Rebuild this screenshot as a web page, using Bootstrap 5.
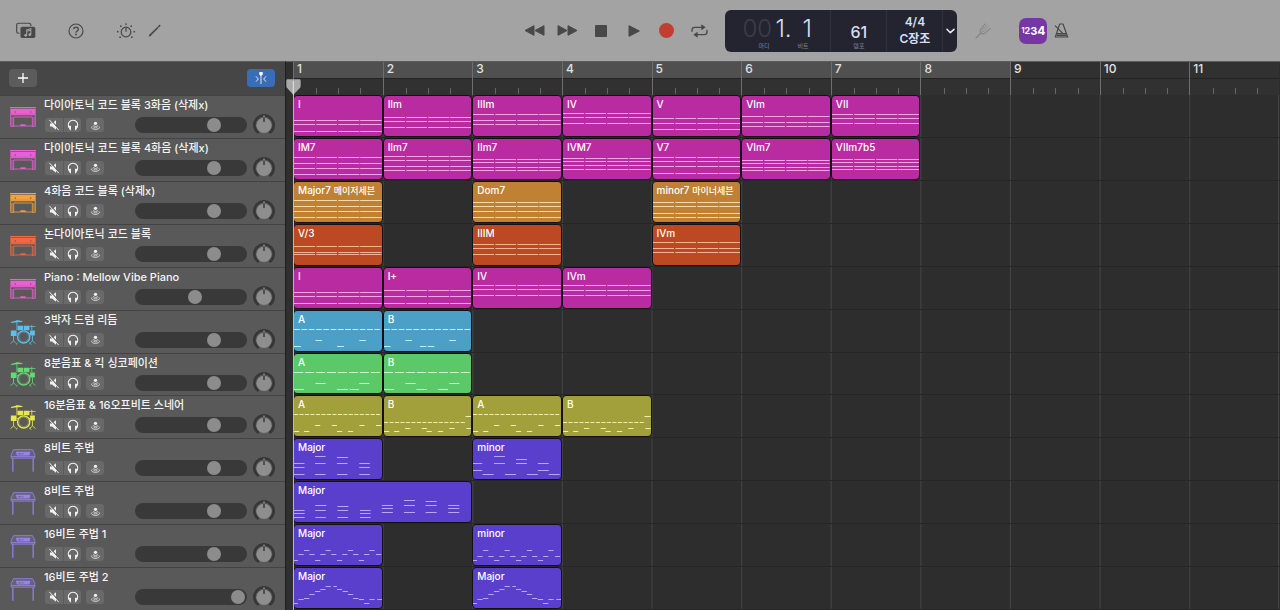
<!DOCTYPE html>
<html lang="ko" data-bs-theme="dark">
<head>
<meta charset="utf-8">
<meta name="viewport" content="width=device-width, initial-scale=1">
<title>GarageBand</title>
<link href="https://cdn.jsdelivr.net/npm/bootstrap@5.3.0/dist/css/bootstrap.min.css" rel="stylesheet">
<style>
  body { font-family: Inter, "Noto Sans CJK KR", sans-serif; font-size: 11px; line-height: 16px; background: #2d2d2d; color: #f2f2f2; }
  svg { display: block; }
  button { background: none; border: 0; padding: 0; color: inherit; }
  .app { height: 100vh; }

  /* top bar */
  .topbar { height: 61px; background: #a3a3a3; color: #484848; }
  .tools { flex: 0 0 40.5%; padding-left: 12px; }
  .tools .apart { margin-left: 22px; }
  .tool { width: 28px; height: 28px; display: grid; place-items: center; }
  .transport .tool { width: 33px; }
  .lcd { width: 232px; height: 42px; margin-left: 9px; border-radius: 6px; background: #232430; color: #d5def2; }
  .lcd > * + * { border-left: 1px solid #2f303c; }
  .lcd-pos { width: 105px; padding-left: 17px; }
  .lcd-mid { width: 56px; }
  .lcd-menu { width: 15px; flex: 1; }
  .digits { font-size: 24px; line-height: 26px; font-weight: 300; padding-top: 6px; }
  .digits .off { color: #3c3d48; width: 33px; }
  .digits .beat { margin-left: 11px; }
  .tempo { font-size: 16px; line-height: 18px; font-weight: 500; padding: 13px 0 1px; }
  .cap { font-size: 6px; line-height: 8px; color: #7d8397; }
  .sig { font-size: 12px; line-height: 17px; font-weight: 600; padding-top: 3px; }
  .countin { width: 28px; height: 26px; margin-left: 26px; border-radius: 7px; background: #7636a4; color: #fff; font-weight: 700; line-height: 26px; }
  .c1 { font-size: 7px; } .c2 { font-size: 9px; } .c3 { font-size: 11px; } .c4 { font-size: 12px; }

  /* track headers */
  .heads { width: 285px; background: #595959; border-top: 1px solid #5d5d5d; }
  .heads-bar { height: 33px; background: #464646; padding: 0 10px 2px 9px; }
  .bar-btn { width: 28px; height: 18px; border-radius: 4px; background: #5c5c5c; display: grid; place-items: center; }
  .bar-btn.on { background: #3a6db8; }
  .head { flex: 1 0 0; min-height: 42px; border-top: 1px solid #434343; padding: 1px 10px 0; }
  .picto { width: 26px; }
  .head-body { margin-left: 8px; }
  .name { font-size: 11px; line-height: 17px; font-weight: 500; color: #f4f4f4; }
  .mini { height: 14px; width: 18px; background: #696969; display: grid; place-items: center; }
  .mini.l { border-radius: 3px 0 0 3px; margin-left: 1px; }
  .mini.r { border-radius: 0 3px 3px 0; border-left: 1px solid #5b5b5b; }
  .mini.s { border-radius: 3px; margin-left: 5px; }
  .vol { appearance: none; width: 112px; height: 16px; border-radius: 8px; background: #393939; padding: 0 1px; margin: 0 6px 0 auto; }
  .vol::-webkit-slider-runnable-track { height: 16px; background: transparent; }
  .vol::-webkit-slider-thumb { appearance: none; width: 14px; height: 14px; margin-top: 1px; border-radius: 50%; background: #8c8c8c; }
  .vol::-moz-range-thumb { width: 14px; height: 14px; border: 0; border-radius: 50%; background: #8c8c8c; }

  /* timeline */
  .gutter { width: 8px; background: #2f2f2f; border-left: 1px solid #202020; border-top: 1px solid #5d5d5d; }
  .stage { min-width: 0; padding-right: 1px; border-top: 1px solid #5d5d5d; }
  .eleven { display: grid; grid-template-columns: repeat(11, minmax(0, 1fr)); }
  .ruler { height: 33px; }
  .measure { border-left: 1px solid #6e6e6e; }
  .measure span { display: block; height: 17px; line-height: 14px; font-size: 12px; font-weight: 500; padding-left: 3px; color: #e2e2e2; background: #313131; border-bottom: 1px solid #232323; }
  .measure.song span { background: #505050; }
  .ticks { height: 16px; background: #313131; padding-top: 9px; display: grid; grid-template-columns: repeat(4, 1fr); }
  .ticks i { border-left: 1px solid #666; height: 6px; }
  .ticks i:first-child { visibility: hidden; }
  .lanes { box-shadow: inset -1px 0 #454545; background: linear-gradient(to right, #444 1px, transparent 1px) 0 0 / calc(100% / 11) 100%; }
  .lane { flex: 1 0 0; min-height: 42px; border-bottom: 1px solid #262626; }
  .region { grid-row: 1; border: 1px solid #151015; border-radius: 4px; overflow: hidden; display: grid; }
  .region > * { grid-area: 1 / 1; }
  .label { font-size: 10px; line-height: 12px; font-weight: 500; padding: 2px 0 0 4px; color: #fff; white-space: nowrap; }
  .label :lang(ko) { font-size: 9px; }
  .playhead { top: 0; bottom: 0; left: 0; width: 15px; margin-left: -7px; pointer-events: none; }
  .playhead::after { content: ""; display: block; width: 1px; background: #b9b9b9; margin-left: 7px; flex: 1; }
  .pin { margin-top: 17px; }
  .magenta { background: #b92ba0; } .magenta rect { fill: #f3a5e6; }
  .amber { background: #c08134; } .amber rect { fill: #f9d9a8; }
  .rust { background: #ba4924; } .rust rect { fill: #f6b294; }
  .blue { background: #4aa0c6; } .blue rect { fill: #c3ecfa; }
  .green { background: #5cc969; } .green rect { fill: #c6f9c8; }
  .olive { background: #a1a03b; } .olive rect { fill: #efefad; }
  .violet { background: #593fcb; } .violet rect { fill: #b7a7f8; }
</style>
</head>
<body>
<svg class="d-none">
  <symbol id="piano" viewBox="0 0 78 60">
    <path fill="currentColor" d="M0 0h78v4H0zM1 5h76v20H1z"/>
    <path fill="#595959" opacity=".7" d="M14 13h4v4h-4zM60 13h4v4h-4z"/>
    <path fill="#595959" opacity=".35" d="M0 4h78v2H0zM0 20h78v2H0z"/>
    <path fill="none" stroke="currentColor" stroke-width="2.5" d="M2 24v34h9V30h56v28h9V24M6 30v26M72 30v26M8 57h23M46 57h23"/>
    <path fill="currentColor" d="M31 52h16v6H31z"/>
  </symbol>
  <symbol id="drums" viewBox="0 0 76 74">
    <path fill="currentColor" d="M2 6l20-5 14 2v3L20 7 3 9zM2 31h17v16H2zM22 17h17v13H22zM41 17h16v13H41zM59 31h14v15H59zM57 18h18v2H57z"/>
    <path fill="none" stroke="currentColor" stroke-width="2.5" d="M20 0v30M64 14v16M10 47v15l-9 8M10 62l8 8M66 46v16l-9 8M66 62l9 8M22 68l-5 5M57 68l6 5M20 40h40"/>
    <circle cx="40" cy="50" r="18" fill="#595959" stroke="currentColor" stroke-width="4"/>
    <circle cx="40" cy="50" r="14" fill="none" stroke="currentColor" stroke-width="1"/>
  </symbol>
  <symbol id="keys" viewBox="0 0 74 68">
    <path fill="currentColor" fill-opacity=".2" stroke="currentColor" stroke-width="2.5" stroke-linejoin="round" d="M9 2h56l7 14v11H2V16z"/>
    <path fill="currentColor" d="M16 8h43l-3 11H19zM2 21h70v2H2z"/>
    <path fill="#595959" d="M24 12h3v4h-3zM30 12h2v4h-2zM36 12h2v4h-2z"/>
    <path stroke="currentColor" stroke-width="3.5" d="M7 27v40M67 27v40"/>
  </symbol>
  <symbol id="mute" viewBox="0 0 30 30">
    <path fill="#f0f0f0" d="M5 11h5l10-8v24l-10-8H5z"/>
    <path stroke="#696969" stroke-width="3" d="M7 2l21 24"/>
    <path stroke="#f0f0f0" stroke-width="2.5" stroke-linecap="round" d="M4 3l22 24"/>
  </symbol>
  <symbol id="phones" viewBox="0 0 30 30">
    <path fill="none" stroke="#f0f0f0" stroke-width="2.6" d="M5 22C0 11 7 3 15 3s15 8 10 19"/>
    <path fill="#f0f0f0" d="M5 17h5v11H8c-3-2-4-7-3-11zM25 17h-5v11h2c3-2 4-7 3-11z"/>
  </symbol>
  <symbol id="monitor" viewBox="0 0 30 30">
    <circle cx="15" cy="9" r="4.5" fill="#f0f0f0"/>
    <path fill="none" stroke="#f0f0f0" stroke-width="2" stroke-linecap="round" d="M9 16q6 4 12 0M5 18q-3 3 2 6 8 4 16 0 5-3 2-6M11 21q4 2 8 0"/>
  </symbol>
  <symbol id="pan" viewBox="0 0 66 66">
    <path fill="none" stroke="#373737" stroke-width="8" d="M17 57A29 29 0 1 1 49 57"/>
    <circle cx="33" cy="34" r="23" fill="#8e8e8e"/>
    <path stroke="#222" stroke-width="3.5" d="M33 11v13"/><path stroke="#ddd" stroke-width="2" d="M33 4v6"/>
  </symbol>
</svg>

<div class="app d-flex flex-column overflow-hidden">
  <header class="topbar d-flex align-items-center">
    <div class="tools d-flex align-items-center">
      <button class="tool" aria-label="Loop library"><svg width="20" height="17" viewBox="0 0 58 48"><path fill="none" stroke="currentColor" stroke-width="3.5" d="M10 32H7c-3 0-5-2-5-5V8c0-3 2-5 5-5h31c3 0 5 2 5 5v3"/><rect x="13" y="13" width="43" height="33" rx="5" fill="currentColor"/><path fill="none" stroke="#a3a3a3" stroke-width="3" d="M31 38V22l12-3v17M31 26l12-3"/><circle cx="28" cy="38" r="4" fill="#a3a3a3"/><circle cx="40" cy="36" r="4" fill="#a3a3a3"/></svg></button>
      <button class="tool apart" aria-label="Help"><svg width="16" height="16" viewBox="0 0 48 48"><circle cx="24" cy="24" r="21" fill="none" stroke="currentColor" stroke-width="3.5"/><path fill="none" stroke="currentColor" stroke-width="4" d="M17 19c0-9 14-9 14 0 0 5-7 5-7 10"/><circle cx="24" cy="34.500" r="2.800" fill="currentColor"/></svg></button>
      <button class="tool apart" aria-label="Smart controls"><svg width="20" height="16" viewBox="0 0 58 46"><circle cx="29" cy="26" r="14" fill="none" stroke="currentColor" stroke-width="3.500"/><path stroke="currentColor" stroke-width="3.500" d="M29 12v13"/><g fill="currentColor"><circle cx="29" cy="3" r="2.500"/><circle cx="14" cy="9" r="2.500"/><circle cx="44" cy="9" r="2.500"/><circle cx="5" cy="25" r="2.500"/><circle cx="53" cy="25" r="2.500"/><circle cx="12" cy="41" r="2.500"/><circle cx="46" cy="41" r="2.500"/></g></svg></button>
      <button class="tool" aria-label="Editors"><svg width="13" height="13" viewBox="0 0 38 38"><path stroke="currentColor" stroke-width="5" stroke-linecap="round" d="M7 32L28 11"/><path stroke="currentColor" stroke-width="5" stroke-linecap="round" d="M32 7l2-2"/><path fill="currentColor" d="M2 37l3-8 5 5z"/></svg></button>
    </div>
    <div class="transport d-flex">
      <button class="tool" aria-label="Rewind"><svg width="21" height="13" viewBox="0 0 63 39"><path fill="currentColor" stroke="currentColor" stroke-width="3" stroke-linejoin="round" d="M30 5v29L3 19.500zM60 5v29L33 19.500z"/></svg></button>
      <button class="tool" aria-label="Forward"><svg width="21" height="13" viewBox="0 0 63 39"><path fill="currentColor" stroke="currentColor" stroke-width="3" stroke-linejoin="round" d="M3 5v29l27-14.500zM33 5v29l27-14.500z"/></svg></button>
      <button class="tool" aria-label="Stop"><svg width="12" height="12"><rect width="12" height="12" rx="1" fill="currentColor"/></svg></button>
      <button class="tool" aria-label="Play"><svg width="12" height="14" viewBox="0 0 36 42"><path fill="currentColor" stroke="currentColor" stroke-width="3" stroke-linejoin="round" d="M3 5v32l31-16z"/></svg></button>
      <button class="tool" aria-label="Record"><svg width="15" height="15"><circle cx="7.500" cy="7.500" r="7.500" fill="#c23e31"/></svg></button>
      <button class="tool" aria-label="Cycle"><svg width="17" height="14" viewBox="0 0 51 42"><path fill="none" stroke="currentColor" stroke-width="4" stroke-linecap="round" d="M3 22v-4c0-6 3-8 8-8h25M48 19v5c0 6-3 8-8 8H15"/><path fill="currentColor" d="M31 1l13 9-13 9zM20 23L7 32l13 9z"/></svg></button>
    </div>
    <div class="lcd d-flex flex-shrink-0">
      <div class="lcd-pos">
        <div class="digits d-flex"><span class="off">00</span><span>1.</span><span class="beat">1</span></div>
        <div class="cap d-flex gap-4 ms-3"><span>마디</span><span class="ms-1">비트</span></div>
      </div>
      <div class="lcd-mid text-center"><div class="tempo">61</div><div class="cap">템포</div></div>
      <div class="lcd-mid sig text-center"><div>4/4</div><div>C장조</div></div>
      <button class="lcd-menu d-grid align-items-center justify-content-center" aria-label="Display mode"><svg width="9" height="6" viewBox="0 0 27 18"><path fill="none" stroke="#eee" stroke-width="4.500" stroke-linecap="round" stroke-linejoin="round" d="M3 4l10 10L24 4"/></svg></button>
    </div>
    <button class="tool ms-2" aria-label="Tuner"><svg class="ms-2" width="16" height="16" viewBox="0 0 48 48" fill="none" stroke="#858585" stroke-width="3.500" stroke-linecap="round"><path d="M3 45l15-15M30 3L18 18c-4 5-3 9 0 12s8 3 12 0L46 17"/><path stroke-width="2" d="M36 6L22 22v4h4l14-15"/></svg></button>
    <button class="countin d-flex justify-content-center align-items-center" aria-label="Count-in"><span class="c1">1</span><span class="c2">2</span><span class="c3">3</span><span class="c4">4</span></button>
    <button class="tool" aria-label="Metronome"><svg width="15" height="15" viewBox="0 0 45 45" fill="none" stroke="currentColor" stroke-width="3.500" stroke-linejoin="round"><path d="M17 3h10l14 39H4zM8 32h30M3 8l24 24M2 42h41"/><path d="M8 37h30" stroke-width="5"/></svg></button>
  </header>

  <main class="d-flex flex-fill overflow-hidden">
    <section class="heads d-flex flex-column flex-shrink-0">
      <div class="heads-bar d-flex align-items-center justify-content-between">
        <button class="bar-btn" aria-label="Add track"><svg width="10" height="10"><path stroke="#fff" stroke-width="1.300" d="M5 0v10M0 5h10"/></svg></button>
        <button class="bar-btn on" aria-label="Catch playhead"><svg width="12" height="12" viewBox="0 0 36 36" fill="none" stroke="#fff" stroke-width="2.500"><path d="M18 8v28M3 13l7 8-7 8M33 13l-7 8 7 8"/><path fill="#fff" d="M14 1h8v6l-4 4-4-4z"/></svg></button>
      </div>
      <div id="heads" class="d-flex flex-column flex-fill"></div>
    </section>
    <div class="gutter flex-shrink-0"></div>
    <section class="stage d-flex flex-column flex-fill position-relative">
      <div id="ruler" class="ruler eleven flex-shrink-0"></div>
      <div id="lanes" class="lanes d-flex flex-column flex-fill"></div>
      <div class="playhead position-absolute d-flex flex-column"><svg class="pin" width="15" height="16" viewBox="0 0 45 48"><path fill="#aaa" d="M5 1h35q4 0 4 4v17q0 3-3 6L22 47 4 28q-3-3-3-6V5q0-4 4-4z"/><path stroke="#eee" stroke-width="2.500" d="M22 6v42"/></svg></div>
    </section>
  </main>
</div>

<script>
  // A note is [start, length] in percent of a bar; each voice is [y, notes].
  const beats = [[0, 24], [25.5, 23.5], [50.5, 24], [75.5, 24.5]];
  const chord = (...ys) => ys.map(y => [y, beats]);
  const steps = (n, len, count = n) => Array.from({ length: count }, (_, i) => [i * 100 / n, len]);
  const at = (len, ...xs) => xs.map(x => [x, len]);
  const drumA = [[18, steps(16, 4.7)], [29, at(6, 24, 43, 74.5, 93.5)], [35, at(6, 0, 11.5, 49, 61.5)]];
  const drumB = [[20, at(7, 93)], [26, steps(16, 4.7, 15)], [32, at(6, 24, 43, 74.5, 94)], [35, at(6, 0, 11.5, 48.5, 61.5)]];
  const arpeggio = y => [[25, at(6, 11.5, 36, 61.5, 86)], [y, at(6, 5, 17.5, 30, 42.5, 55, 67.5, 80, 93.5)], [35, [[0, 4.5], ...at(6, 24, 49, 74)]]];
  const climb = [[35, [[0, 4.5], [80, 6]]], [31, at(6, 5, 74, 86, 95)], [30, at(6, 11.5, 67.5)], [26, at(6, 17.5, 61.5)], [23, at(6, 24, 55.5)], [21, at(6, 30, 49)], [18, [[36, 6], [45, 4]]]];

  const tracks = [
    { name: '다이아토닉 코드 블록 3화음 (삭제x)', icon: 'piano', tint: '#ea5fd2', color: 'magenta', regions: [
      [1, 1, 'I', chord(24, 28, 35)], [2, 1, 'IIm', chord(21, 25, 31)], [3, 1, 'IIIm', chord(18, 24, 28)], [4, 1, 'IV', chord(17, 21, 27)],
      [5, 1, 'V', chord(22, 27, 33)], [6, 1, 'VIm', chord(20, 26, 30)], [7, 1, 'VII', chord(18, 22, 27)]] },
    { name: '다이아토닉 코드 블록 4화음 (삭제x)', icon: 'piano', tint: '#ea5fd2', color: 'magenta', regions: [
      [1, 1, 'IM7', chord(18, 24, 29, 35)], [2, 1, 'IIm7', chord(17, 21, 27, 31)], [3, 1, 'IIm7', chord(20, 23, 28, 31)], [4, 1, 'IVM7', chord(19, 22, 26, 30)],
      [5, 1, 'V7', chord(18, 22, 27, 34)], [6, 1, 'VIm7', chord(21, 24, 28, 31)], [7, 1, 'VIIm7b5', chord(20, 23, 27, 30)]] },
    { name: '4화음 코드 블록 (삭제x)', icon: 'piano', tint: '#f3a33c', color: 'amber', regions: [
      [1, 1, 'Major7 <span lang="ko">메이저세븐</span>', chord(18, 24, 29, 35)], [3, 1, 'Dom7', chord(20, 24, 29, 35)], [5, 1, 'minor7 <span lang="ko">마이너세븐</span>', chord(20, 24, 31, 35)]] },
    { name: '논다이아토닉 코드 블록', icon: 'piano', tint: '#ef6a40', color: 'rust', regions: [
      [1, 1, 'V/3', chord(21, 27, 29)], [3, 1, 'IIIM', chord(19, 23, 29)], [5, 1, 'IVm', chord(17, 23, 27)]] },
    { name: 'Piano : Mellow Vibe Piano', icon: 'piano', tint: '#ea5fd2', color: 'magenta', vol: 54, regions: [
      [1, 1, 'I', chord(24, 28, 35)], [2, 1, 'I+', chord(22, 28, 35)], [3, 1, 'IV', chord(17, 21, 27)], [4, 1, 'IVm', chord(17, 22, 27)]] },
    { name: '3박자 드럼 리듬', icon: 'drums', tint: '#5cc0ea', color: 'blue', regions: [
      [1, 1, 'A', [[18, steps(12, 6.7)], [29, at(7.5, 24.5, 74.5)], [35, at(8, 0, 49)]]],
      [2, 1, 'B', [[18, steps(12, 6.7)], [29, at(7.5, 24.5, 74.5)], [35, at(7.5, 0, 41, 50)]]]] },
    { name: '8분음표 &amp; 킥 싱코페이션', icon: 'drums', tint: '#5fdc74', color: 'green', regions: [
      [1, 1, 'A', [[18, steps(8, 10.5)], [29, at(11.5, 24.5, 74.5)], [35, [[0, 11.5], [49, 12.5], [63.5, 10.5]]]]],
      [2, 1, 'B', [[18, steps(8, 10.5)], [29, at(11.5, 24.5, 74.5)], [35, at(11.5, 0, 37, 61.5)]]]] },
    { name: '16분음표 &amp; 16오프비트 스네어', icon: 'drums', tint: '#e9e64e', color: 'olive', regions: [
      [1, 1, 'A', drumA], [2, 1, 'B', drumB], [3, 1, 'A', drumA], [4, 1, 'B', drumB]] },
    { name: '8비트 주법', icon: 'keys', tint: '#9684ee', color: 'violet', regions: [
      [1, 1, 'Major', [[17, at(12, 24)], [18, at(12.5, 49)], [24, at(12, 0, 24, 49, 74.5)], [28, at(12, 0, 74.5)], [35, at(12, 0, 24, 49, 74.5)]]],
      [3, 1, 'minor', [[17, at(12.5, 24)], [20, at(12.5, 49)], [24, [[0, 10.5], ...at(12.5, 24, 49, 74)]], [31, [[0, 10.5], [74, 12.5]]], [35, at(12.5, 11, 36.5, 61.5, 86.5)]]]] },
    { name: '8비트 주법', icon: 'keys', tint: '#9684ee', color: 'violet', regions: [
      [1, 2, 'Major', [[18, at(12.5, 124)], [19, at(12.5, 148.5)], [23, at(12.5, 24, 99, 124, 148.5, 174)], [24, at(12.5, 49)], [26, at(12.5, 99, 174)],
        [28, at(12, 0, 24, 49, 74.5)], [30, at(12.5, 99, 124, 148.5, 174)], [31, at(12, 0, 74.5)], [35, at(12, 0, 24, 49, 74.5)]]]] },
    { name: '16비트 주법 1', icon: 'keys', tint: '#9684ee', color: 'violet', regions: [
      [1, 1, 'Major', arpeggio(29)], [3, 1, 'minor', arpeggio(31)]] },
    { name: '16비트 주법 2', icon: 'keys', tint: '#9684ee', color: 'violet', vol: 99, regions: [
      [1, 1, 'Major', climb], [3, 1, 'Major', climb]] }
  ];
  const iconHeight = { piano: 20, drums: 25, keys: 23 };

  document.getElementById('ruler').innerHTML = Array.from({ length: 11 }, (_, i) =>
    `<div class="measure ${i < 8 ? 'song' : ''}"><span>${i + 1}</span><div class="ticks"><i></i><i></i><i></i><i></i></div></div>`).join('');

  document.getElementById('heads').innerHTML = tracks.map((t, i) => `
    <div class="head d-flex">
      <div class="picto d-flex align-items-center"><svg width="26" height="${iconHeight[t.icon]}" color="${t.tint}"><use href="#${t.icon}"/></svg></div>
      <div class="head-body flex-fill">
        <label class="name d-block" for="vol${i}">${t.name}</label>
        <div class="d-flex align-items-center">
          <button class="mini l" aria-label="Mute"><svg width="12" height="12"><use href="#mute"/></svg></button>
          <button class="mini r" aria-label="Solo"><svg width="12" height="12"><use href="#phones"/></svg></button>
          <button class="mini s" aria-label="Input monitoring"><svg width="11" height="11"><use href="#monitor"/></svg></button>
          <input class="vol" type="range" id="vol${i}" min="0" max="100" value="${t.vol || 74}">
          <button aria-label="Pan"><svg width="22" height="22"><use href="#pan"/></svg></button>
        </div>
      </div>
    </div>`).join('');

  const notes = (voices, span) => voices.map(([y, list]) => list.map(([x, w]) =>
    `<rect x="${x / span}%" y="${y}" width="${w / span}%" height="1"/>`).join('')).join('');

  document.getElementById('lanes').innerHTML = tracks.map(t => `
    <div class="lane eleven">${t.regions.map(([bar, span, label, voices]) => `
      <div class="region ${t.color}" style="grid-column:${bar} / span ${span}">
        <svg width="100%" height="40">${notes(voices, span)}</svg>
        <div class="label">${label}</div>
      </div>`).join('')}
    </div>`).join('');
</script>
<script src="https://cdn.jsdelivr.net/npm/bootstrap@5.3.0/dist/js/bootstrap.bundle.min.js"></script>
</body>
</html>
